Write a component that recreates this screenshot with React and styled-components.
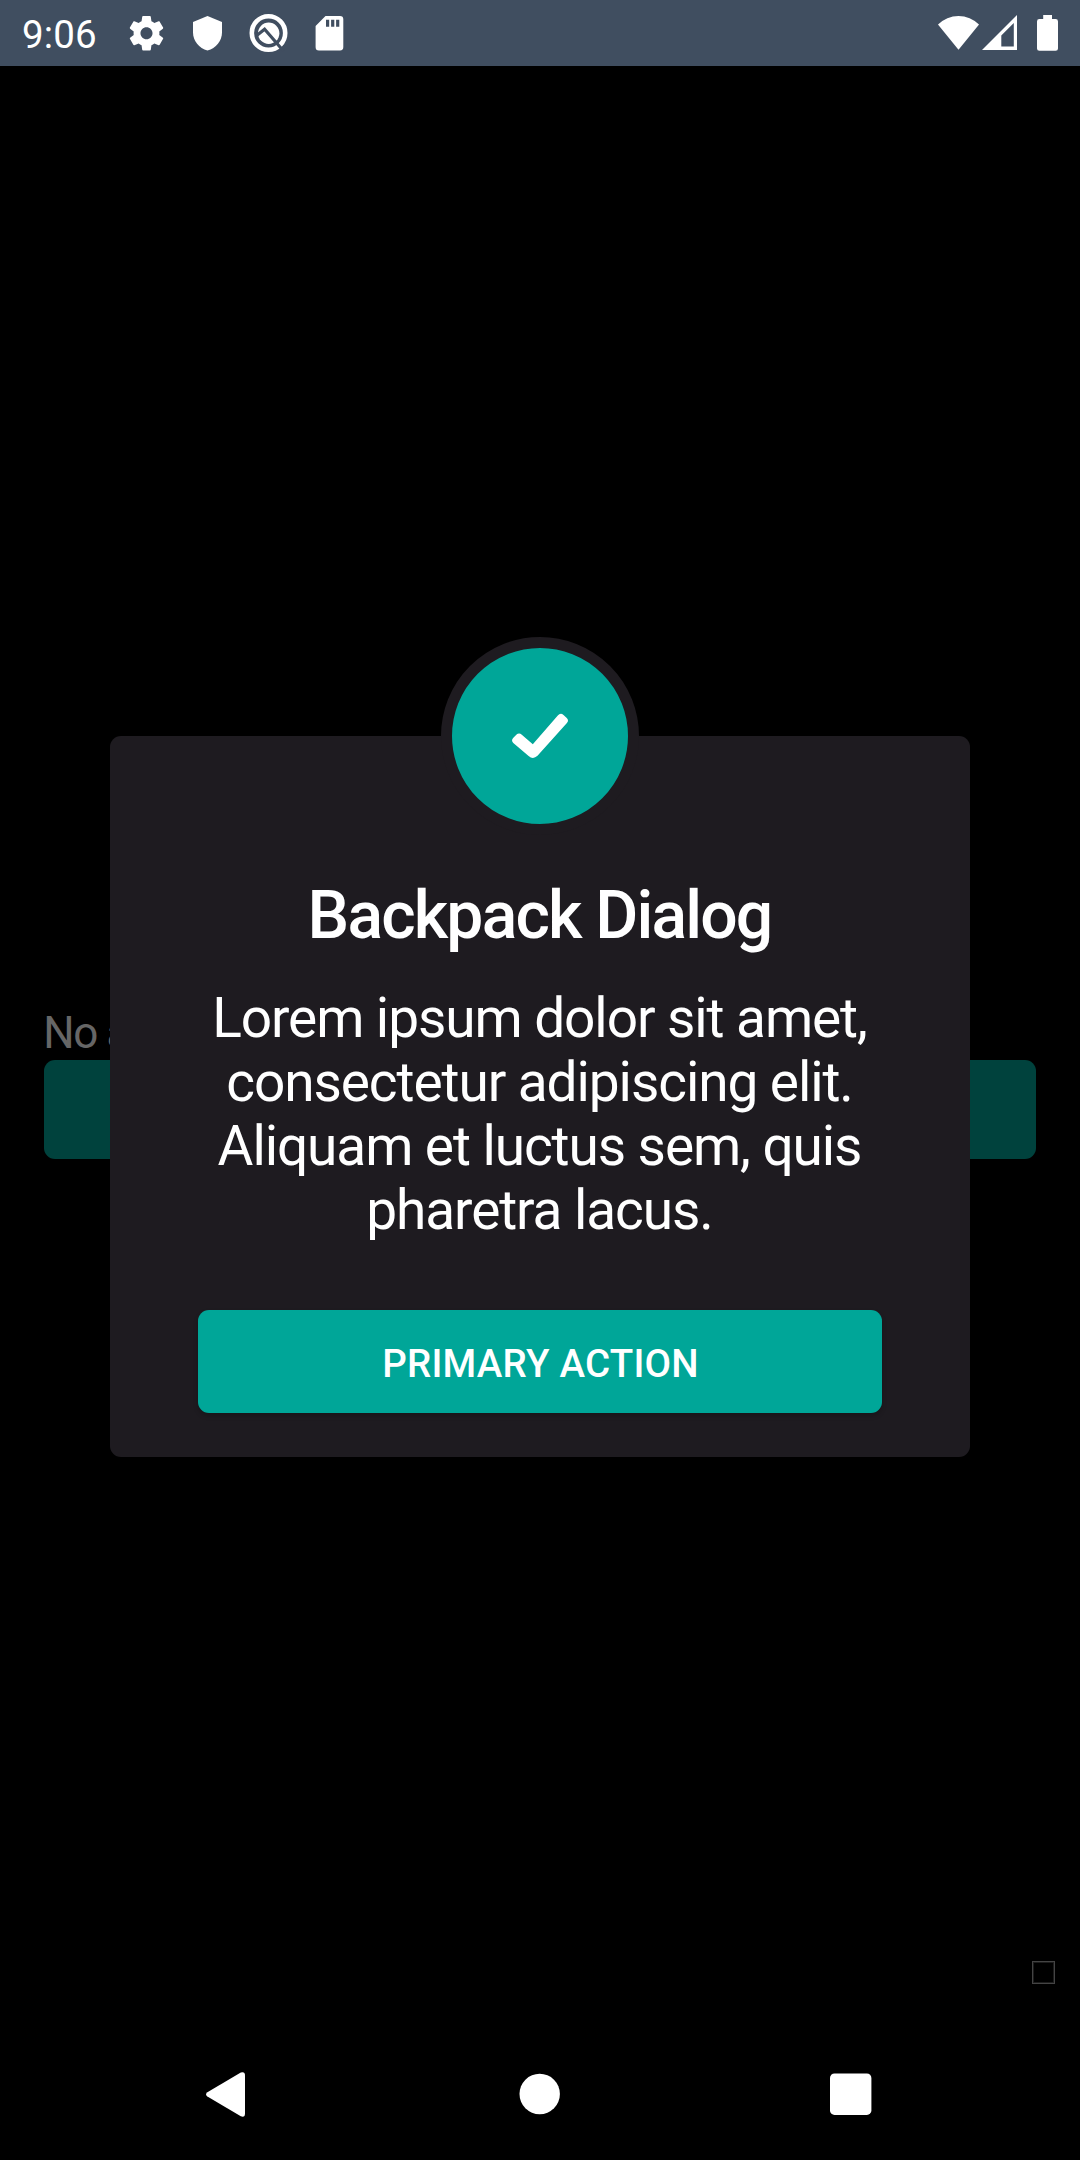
import React from 'react';
import styled, { createGlobalStyle } from 'styled-components';

const GlobalStyle = createGlobalStyle`
  html, body {
    margin: 0;
    background: #000;
  }
  * {
    box-sizing: border-box;
  }
`;

const Screen = styled.div`
  position: relative;
  display: flex;
  flex-direction: column;
  width: 1080px;
  height: 2160px;
  overflow: hidden;
  background: #000;
  color: #fff;
  font-family: Roboto, "Noto Sans", sans-serif;
`;

const StatusBar = styled.header`
  display: flex;
  align-items: center;
  flex: none;
  height: 66px;
  padding: 0 22px;
  background: #404e60;
`;

const Clock = styled.time`
  width: 104px;
  padding-top: 3px;
  font-size: 38.5px;
  line-height: 45px;
  letter-spacing: 0.1px;
`;

const Notifications = styled.div`
  display: flex;
  gap: 20px;
  flex: 1;
`;

const SystemIcons = styled.div`
  display: flex;
  align-items: flex-start;
  height: 36px;
`;

const Icon = styled.svg`
  display: block;
  flex: none;
  width: ${(p) => p.width}px;
  height: ${(p) => p.height}px;
  margin-left: ${(p) => p.$before || 0}px;
  fill: #fff;
`;

const Content = styled.main`
  display: flex;
  flex-direction: column;
  flex: 1;
  padding: 941px 44px 0;
`;

const Message = styled.p`
  margin: 0 0 1px -0.8px;
  color: #666;
  font-size: 44px;
  line-height: 52px;
  letter-spacing: -1.35px;
`;

const PageButton = styled.button`
  flex: none;
  height: 99px;
  border: 0;
  border-radius: 11px;
  background: #00423d;
`;

const Marker = styled.div`
  align-self: flex-end;
  width: 23px;
  height: 23px;
  margin: 802px -19px 0 0;
  border: 1px solid #444;
  box-shadow: inset 0 0 0 1px #1c1c1c;
`;

const NavBar = styled.nav`
  display: flex;
  justify-content: space-between;
  align-items: center;
  flex: none;
  height: 132px;
  padding: 0 208px 0 206px;
`;

const Overlay = styled.div`
  position: absolute;
  inset: 0;
  display: flex;
  flex-direction: column;
  align-items: center;
  padding-top: 637px;
`;

const Badge = styled.div`
  display: flex;
  flex: none;
  width: 198px;
  height: 198px;
  margin-bottom: -99px;
  border: 11px solid #1e1b20;
  border-radius: 50%;
  background: #00a698;
  z-index: 1;
`;

const Dialog = styled.section`
  display: flex;
  flex-direction: column;
  width: 860px;
  height: 721px;
  padding: 141px 88px 44px;
  border-radius: 11px;
  background: #1e1b20;
  text-align: center;
`;

const Title = styled.h1`
  margin: 0 1px 32px 0;
  font-size: 66px;
  font-weight: 500;
  line-height: 77px;
  letter-spacing: -1.82px;
`;

const Body = styled.p`
  margin: 0 1px 68px 0;
  font-size: 55px;
  line-height: 64px;
  letter-spacing: -1.09px;
`;

const PrimaryButton = styled.button`
  height: 103px;
  padding: 4px 0 0 1px;
  border: 0;
  border-radius: 11px;
  background: #00a698;
  box-shadow: 0 3px 5px rgba(0, 0, 0, 0.2);
  color: #fff;
  font: 500 38.5px/45px Roboto, sans-serif;
  letter-spacing: 0.2px;
`;

function NotificationIcons() {
  return (
    <Notifications>
      <Icon width="41" height="42" viewBox="0 0 41 42">
        <path
          transform="translate(-0.14 0.6) scale(1.72)"
          d="M19.43 12.98c.04-.32.07-.64.07-.98s-.03-.66-.07-.98l2.11-1.65c.19-.15.24-.42.12-.64l-2-3.46c-.12-.22-.39-.3-.61-.22l-2.49 1c-.52-.4-1.08-.73-1.69-.98l-.38-2.65C14.46 2.18 14.25 2 14 2h-4c-.25 0-.46.18-.49.42l-.38 2.65c-.61.25-1.17.59-1.69.98l-2.49-1c-.23-.09-.49 0-.61.22l-2 3.46c-.13.22-.07.49.12.64l2.11 1.65c-.04.32-.07.65-.07.98s.03.66.07.98l-2.11 1.65c-.19.15-.24.42-.12.64l2 3.46c.12.22.39.3.61.22l2.49-1c.52.4 1.08.73 1.69.98l.38 2.65c.03.24.24.42.49.42h4c.25 0 .46-.18.49-.42l.38-2.65c.61-.25 1.17-.59 1.69-.98l2.49 1c.23.09.49 0 .61-.22l2-3.46c.12-.22.07-.49-.12-.64l-2.11-1.65zM12 15.5c-1.93 0-3.5-1.57-3.5-3.5s1.57-3.5 3.5-3.5 3.5 1.57 3.5 3.5-1.57 3.5-3.5 3.5z"
        />
      </Icon>
      <Icon width="41" height="42" viewBox="0 0 41 42">
        <path d="M20.5 4 35 10V20.5C35 29 29 36.3 20.5 38.5 12 36.3 6 29 6 20.5V10Z" />
      </Icon>
      <Icon width="41" height="42" viewBox="0 0 41 42">
        <circle cx="20.5" cy="21" r="16.7" fill="none" stroke="#fff" strokeWidth="4.6" />
        <circle cx="20.7" cy="21.3" r="10.7" />
        <path d="M8.4 23.8 16.6 17.2 35.5 39" fill="none" stroke="#404e60" strokeWidth="3.1" />
      </Icon>
      <Icon width="41" height="42" viewBox="0 0 41 42">
        <path
          fillRule="evenodd"
          d="M16.5 4H31a3.3 3.3 0 0 1 3.3 3.3V35a3.4 3.4 0 0 1-3.3 3.5H10A3.4 3.4 0 0 1 6.6 35V14ZM17 7.7v7h3.2v-7ZM22.1 7.7v7h3.2v-7ZM27.1 7.7v7h3.2v-7Z"
        />
      </Icon>
    </Notifications>
  );
}

export default function App() {
  return (
    <>
      <GlobalStyle />
      <Screen>
        <StatusBar>
          <Clock>9:06</Clock>
          <NotificationIcons />
          <SystemIcons>
            <Icon width="41" height="35" viewBox="0 0 41 35">
              <path d="M0 9.5A29 29 0 0 1 41 9.5L20.5 34.7Z" />
            </Icon>
            <Icon width="35" height="35" viewBox="0 0 35 35" $before={3}>
              <path fillRule="evenodd" d="M35 0V35H0ZM31.8 8 19.3 20.5V31.5H31.8Z" />
            </Icon>
            <Icon width="21" height="36" viewBox="0 0 21 36" $before={20}>
              <path d="M6.2 0H15V4H18.6Q21 4 21 6.4V33.4Q21 35.8 18.6 35.8H2.4Q0 35.8 0 33.4V6.4Q0 4 2.4 4H6.2Z" />
            </Icon>
          </SystemIcons>
        </StatusBar>

        <Content>
          <Message>No action</Message>
          <PageButton aria-label="Show dialog" />
          <Marker />
        </Content>

        <NavBar>
          <Icon width="39" height="45" viewBox="0 0 39 45">
            <path d="M1.4 20.2 34.8.5Q39 -.8 39 3.4V41.4Q39 45.8 34.8 44.3L1.4 24.6Q-1.3 22.4 1.4 20.2Z" />
          </Icon>
          <Icon width="44" height="42" viewBox="0 0 44 42">
            <circle cx="23.7" cy="21" r="20.2" />
          </Icon>
          <Icon width="42" height="42" viewBox="0 0 42 42">
            <rect y="0.5" width="41.4" height="41.4" rx="4.5" />
          </Icon>
        </NavBar>

        <Overlay>
          <Badge>
            <Icon width="176" height="176" viewBox="0 0 176 176">
              <path
                transform="translate(0.3 0)"
                d="M60.8 90 64 86.8Q66.7 84.3 69.5 86.7L80.5 96.3 105.5 67.5Q108.2 64.4 111.2 67L114.2 69.7Q117 72.2 114.6 75L85.2 107.8Q80.7 112 76.3 108L61 95Q58.6 92.5 60.8 90Z"
              />
            </Icon>
          </Badge>
          <Dialog role="dialog">
            <Title>Backpack Dialog</Title>
            <Body>
              Lorem ipsum dolor sit amet, consectetur adipiscing elit. Aliquam et luctus sem, quis
              pharetra lacus.
            </Body>
            <PrimaryButton>PRIMARY ACTION</PrimaryButton>
          </Dialog>
        </Overlay>
      </Screen>
    </>
  );
}
